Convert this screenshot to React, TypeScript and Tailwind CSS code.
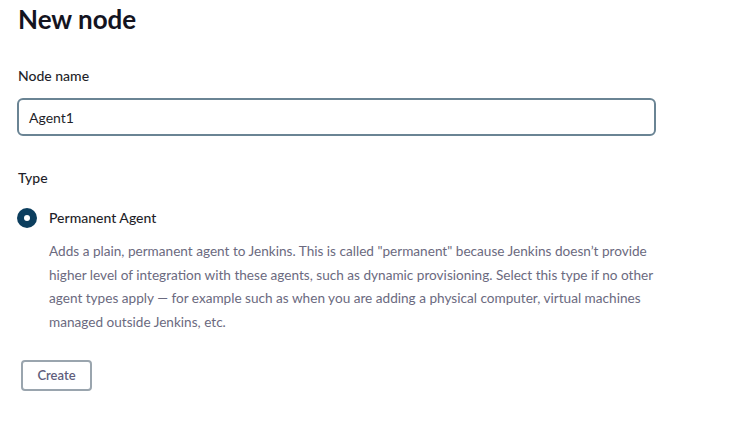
import React from "react";

export default function App() {
  return (
    <div
      className="w-[732px] h-[430px] bg-white overflow-hidden pl-[18px] pt-[2px]"
      style={{ fontFamily: "Lato, 'Noto Sans', sans-serif" }}
    >
      <h1 className="text-[26px] leading-[34px] font-bold text-[#14141f]">New node</h1>
      <div className="mt-[30px] text-[14px] leading-[20px] font-medium text-[#1f1f2a]">Node name</div>
      <div className="mt-[12px] w-[639px] h-[38px] -ml-[1px] border-2 border-[#6a8494] rounded-[6px] flex items-center pl-[10px] text-[14px] text-[#1f1f2a]">
        Agent1
      </div>
      <div className="mt-[32px] text-[14px] leading-[20px] font-medium text-[#1f1f2a]">Type</div>
      <div className="mt-[20px] flex items-center -ml-[1px]">
        <div className="w-[20px] h-[20px] rounded-full bg-[#0c3e5e] flex items-center justify-center">
          <div className="w-[6px] h-[6px] rounded-full bg-white" />
        </div>
        <div className="ml-[12px] text-[14px] leading-[20px] font-medium text-[#1f1f2a]">Permanent Agent</div>
      </div>
      <p className="mt-[12px] ml-[31px] w-[612px] text-[13.6px] leading-[23.7px] text-[#6b6a80]">
        Adds a plain, permanent agent to Jenkins. This is called "permanent" because Jenkins doesn’t provide higher level of integration with these agents, such as dynamic provisioning. Select this type if no other agent types apply — for example such as when you are adding a physical computer, virtual machines managed outside Jenkins, etc.
      </p>
      <button className="mt-[25px] ml-[3px] w-[71px] h-[31px] border-2 border-[#9aa5ae] rounded-[4px] text-[13px] font-semibold text-[#605e7c] bg-white">
        Create
      </button>
    </div>
  );
}
